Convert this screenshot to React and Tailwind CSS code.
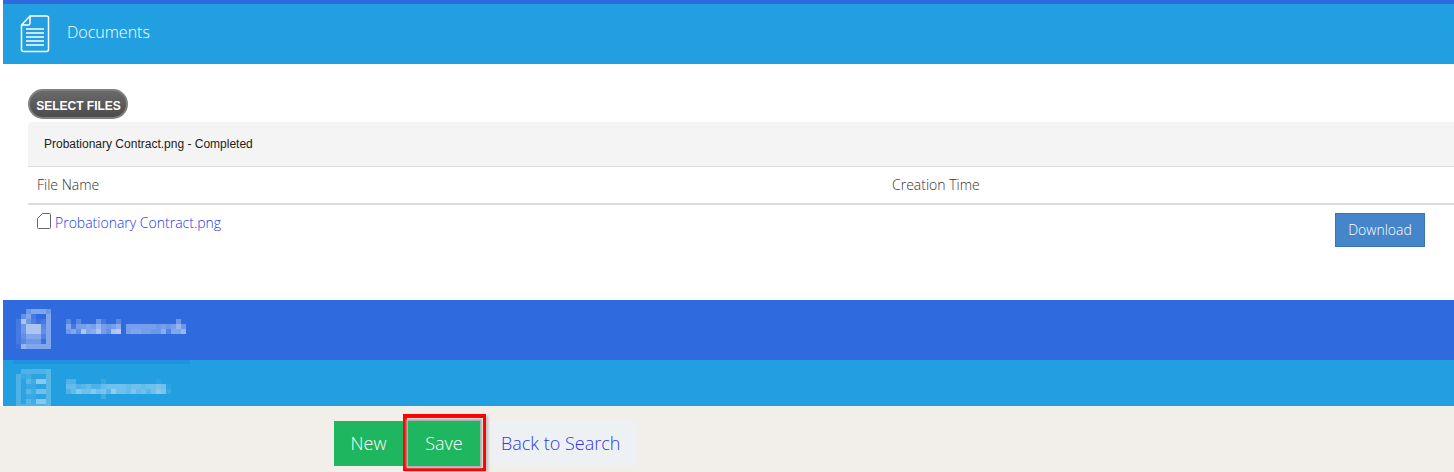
const F = { fontFamily: '"Open Sans", sans-serif' };
const DocIcon = () => (
  <svg width="30" height="38" viewBox="0 0 30 38" fill="none" stroke="#fff" strokeWidth="1.5" className="block">
    <path d="M10 1H26.500a2 2 0 0 1 2 2V34.500a2 2 0 0 1-2 2H3.500a2 2 0 0 1-2-2V10Z" />
    <path d="M10 1V8a2 2 0 0 1-2 2H1.500" />
    <path d="M6 14H24M6 18H24M6 22H24M6 26H24M6 30H24" strokeWidth="1.6" />
  </svg>
);
const FileIcon = () => (
  <svg width="14" height="16" viewBox="0 0 14 16" fill="none" stroke="#666" strokeWidth="1" className="block">
    <path d="M5.500.500H12.500a1 1 0 0 1 1 1V14.500a1 1 0 0 1-1 1H1.500a1 1 0 0 1-1-1V5.500Z" />
  </svg>
);
// Pixelated (censored) artwork: [x, y, white alpha]
const row = (y, x0, alphas) => alphas.map((a, i) => [x0 + i * 5, y, a]);
const medical = [
  ...row(309, 26, [.3, .4, .4, .4, .3]),
  ...row(314, 21, [.25, .4, .1, 0, 0, .4]),
  ...row(319, 16, [.1, .6, .3, .15, .05, .1, .4]),
  ...row(324, 16, [.1, .3, .6, .6, .6, .2, .4]),
  ...row(329, 16, [.1, .3, .6, .6, .6, .25, .4]),
  ...row(334, 16, [.1, .25, .4, .4, .4, .15, .4]),
  ...row(339, 16, [.1, .2, .3, .3, .3, .05, .4]),
  ...row(344, 16, [.05, .5, .4, .4, .4, .4, .4]),
  ...row(319, 66, [.2, 0, .2, 0, 0, 0, .3, .1, 0, 0, .2, 0, 0, 0, 0, 0, 0, 0, 0, 0, 0, 0, .3]),
  ...row(324, 66, [.4, .1, .35, .35, .4, .35, .5, .35, .3, .35, .45, 0, .35, .35, .35, .35, .35, .35, .3, .35, .3, .35, .5, .3]),
  ...row(329, 66, [.3, .4, .25, .6, .4, .45, .6, .35, .25, .6, .65, 0, .35, .4, .4, .35, .35, .3, .3, .45, .15, .4, .4, .5]),
];
const requirements = [
  ...row(369, 21, [.2, .2, .2, .2, .2, .25]),
  ...row(374, 16, [.2, .1, .15, .05, .05, .05, .25]),
  ...row(379, 16, [.2, .05, .25, .15, .45, .45, .25]),
  ...row(384, 16, [.2, .05, .1, .1, .05, .05, .25]),
  ...row(389, 16, [.2, .05, .25, .15, .35, .35, .25]),
  ...row(394, 16, [.2, .05, .1, .1, .05, .05, .25]),
  ...row(399, 16, [.2, .05, .25, .15, .45, .45, .25]),
  ...row(404, 16, [.2, .2, .2, .2, .2, .2, .25]),
  ...row(379, 66, [.2, .2, 0, 0, 0, 0, 0, .1, 0, 0, 0, 0, 0, 0, 0, 0, 0, 0, .05]),
  ...row(384, 66, [.3, .3, .2, .25, .3, .2, .2, .3, .35, .35, .35, .35, .3, .35, .35, .3, .35, .35, .4, .35, .05]),
  ...row(389, 66, [.2, .3, .45, .35, .35, .45, .35, .4, .25, .5, .35, .35, .3, .4, .3, .35, .25, .35, .45, .4, .1]),
  ...row(394, 101, [.15]),
];
const Mosaic = ({ cells, top, height }) => (
  <svg width="177" height={height} viewBox={`13 ${top} 177 ${height}`} className="block ml-[10px]">
    {cells.filter((c) => c[2] > 0).map(([x, y, a], i) => (
      <rect key={i} x={x} y={y} width="5" height="5" fill="#fff" fillOpacity={a} />
    ))}
  </svg>
);
export default function App() {
  return (
    <div className="w-[1454px] h-[472px] overflow-hidden bg-white flex flex-col" style={F}>
      <div className="ml-[3px] h-[4px] bg-[#2f6bdf]" />
      <div className="ml-[3px] h-[60px] bg-[#229fe0] flex items-center pl-[17px] text-white text-[16px] font-light">
        <DocIcon />
        <span className="ml-[17px] pb-[4px]">Documents</span>
      </div>
      <div className="h-[236px] pl-[28px] flex flex-col">
        <div className="mt-[25px] w-[100px] h-[30px] pt-[3px] pl-[1px] rounded-full border-2 border-[#808080] bg-gradient-to-b from-[#6a6a6a] to-[#4c4c4c] text-white text-[12px] font-bold flex items-center justify-center" style={{ fontFamily: '"Liberation Sans", sans-serif' }}>SELECT FILES</div>
        <div className="mt-[3px] h-[45px] bg-[#f4f4f4] rounded-tl-[4px] border-b border-[#dddddd] flex items-center pl-[16px] text-[12px] text-[#222]" style={{ fontFamily: '"Liberation Sans", sans-serif' }}>Probationary Contract.png - Completed</div>
        <div className="h-[38px] pb-[2px] border-b-2 border-[#dddddd] flex items-center text-[14px] text-[#333] font-light">
          <span className="ml-[9px] w-[855px]">File Name</span>
          <span>Creation Time</span>
        </div>
        <div className="flex items-start">
          <div className="ml-[9px] mt-[8px]"><FileIcon /></div>
          <a className="ml-[4px] mt-[7px] text-[14px] text-[#2236f0] font-light">Probationary Contract.png</a>
          <div className="ml-auto mr-[29px] mt-[8px] w-[90px] h-[34px] pb-[2px] bg-[#4585c9] border border-[#3a74b4] text-white text-[14px] font-light flex items-center justify-center">Download</div>
        </div>
      </div>
      <div className="ml-[3px] h-[60px] bg-[#2f6bdf]">
        <Mosaic cells={medical} top={300} height={60} />
      </div>
      <div className="ml-[3px] h-[46px] bg-[#229fe0] relative overflow-hidden">
        <div className="absolute left-[10px] top-0 w-[177px] h-[4px] bg-[#2291e0]" />
        <Mosaic cells={requirements} top={360} height={46} />
      </div>
      <div className="flex-1 bg-[#f2efeb] pl-[334px] pt-[15px] flex items-start text-[18px] text-white font-light">
        <div className="w-[69px] h-[45px] bg-[#1eb65f] flex items-center justify-center">New</div>
        <div className="w-[83px] h-[57px] -mt-[7px] border-[3px] border-t-4 border-l-4 border-[#ff0000] pl-[1px] pt-[3px] shadow-[2px_2px_3px_#bbb]">
          <div className="w-[72px] h-[45px] bg-[#1eb65f] flex items-center justify-center shadow-[0_0_2px_2px_#aaa]">Save</div>
        </div>
        <div className="ml-[4px] w-[147px] h-[45px] pl-[11px] bg-[#eef1f4] text-[#3036e0] flex items-center">Back to Search</div>
      </div>
    </div>
  );
}
